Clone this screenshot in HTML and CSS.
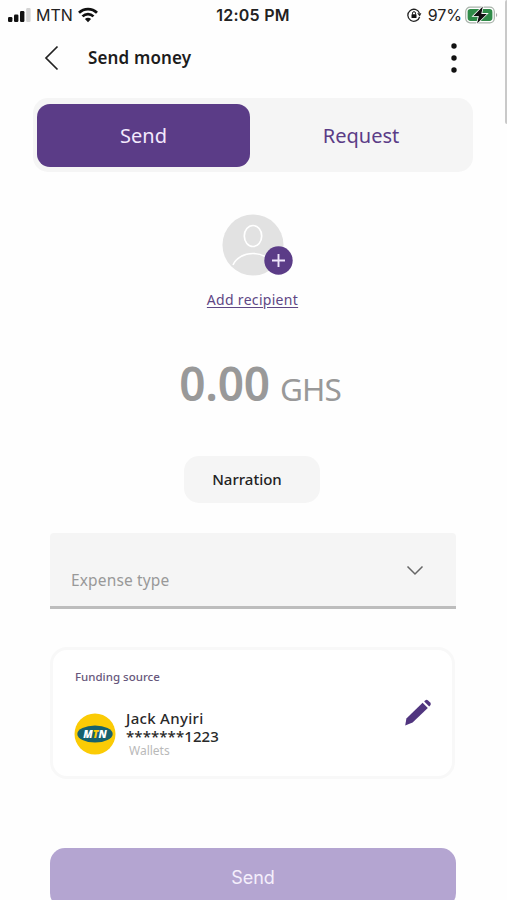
FILE: index.html
```
<!DOCTYPE html>
<html lang="en">
<head>
  <meta charset="UTF-8">
  <meta name="viewport" content="width=device-width, initial-scale=1.0">
  <title>Send money</title>
  <link rel="stylesheet" href="styles.css">
</head>
<body>
  <div class="screen">
    <div class="status-bar">
      <div class="status-left">
        <svg class="signal" width="23" height="16" viewBox="0 0 23 16">
          <rect x="0" y="10" width="4.4" height="5" rx="1.2" fill="#111"/>
          <rect x="6" y="7.5" width="4.4" height="7.5" rx="1.2" fill="#111"/>
          <rect x="12" y="4" width="4.4" height="11" rx="1.2" fill="#111"/>
          <rect x="18.2" y="1" width="4.4" height="14" rx="1.2" fill="#d4d4d4"/>
        </svg>
        <span class="carrier">MTN</span>
        <svg class="wifi" width="20" height="16" viewBox="0 0 20 16" fill="none" stroke="#111" stroke-width="2.7">
          <path d="M1 5.8C6 .8 14 .8 19 5.8"/>
          <path d="M4.5 9.4c3.2-3.1 7.8-3.1 11 0"/>
          <path d="M10 15.2l-3.1-3.1c1.8-1.7 4.4-1.7 6.2 0z" fill="#111" stroke="none"/>
        </svg>
      </div>
      <span class="clock">12:05 PM</span>
      <div class="status-right">
        <svg class="lock" width="15" height="14" viewBox="0 0 15 14">
          <path d="M12.4 5A6 6 0 1 0 12.6 9" fill="none" stroke="#222" stroke-width="1.3"/>
          <path d="M10.2 5.2h4.2l-1.7 3.2z" fill="#222"/>
          <rect x="4.5" y="6.2" width="5" height="3.9" rx=".6" fill="#111"/>
          <path d="M5.5 6.5V5.2a1.5 1.5 0 0 1 3 0v1.3" fill="none" stroke="#111"/>
        </svg>
        <span class="percent">97%</span>
        <svg class="battery" width="33" height="18" viewBox="0 0 33 18">
          <rect x=".7" y="1.2" width="28.6" height="15.6" rx="4.5" fill="#fff" stroke="#a9b3ab" stroke-width="1.2"/>
          <rect x="2.6" y="3.1" width="24.8" height="11.8" rx="2.8" fill="#2f8b48"/>
          <path d="M31 7v4c1.6-.6 1.6-3.4 0-4z" fill="#aaa"/>
          <path d="M17.8 0.6L8.4 10h5.4l-1.700 7.400L21.800 7.900h-5.500z" fill="#111" stroke="#fff" stroke-width="1.6" paint-order="stroke"/>
        </svg>
      </div>
    </div>

    <div class="header">
      <svg class="back" width="15" height="26" viewBox="0 0 15 26" fill="none" stroke="#222" stroke-width="1.7">
        <path d="M13.5 1.5L2 13l11.5 11.5"/>
      </svg>
      <h1>Send money</h1>
      <svg class="menu" width="8" height="32" viewBox="0 0 8 32" fill="#111">
        <circle cx="4" cy="4" r="2.7"/>
        <circle cx="4" cy="16" r="2.7"/>
        <circle cx="4" cy="28" r="2.7"/>
      </svg>
    </div>

    <div class="tabs">
      <div class="tab active">Send</div>
      <div class="tab">Request</div>
    </div>

    <div class="recipient">
      <div class="avatar">
        <svg width="62" height="62" viewBox="0 0 62 62">
          <circle cx="31" cy="31" r="30.5" fill="#e2e2e2"/>
          <g fill="none" stroke="#fff" stroke-width="1.7">
            <ellipse cx="31" cy="22" rx="8.7" ry="10.5"/>
            <path d="M11 51C14 44 22 39.500 31 39.500S48 44 51 51"/>
          </g>
        </svg>
        <svg class="badge" width="29" height="29" viewBox="0 0 29 29">
          <circle cx="14.5" cy="14.5" r="14.2" fill="#5b3c87"/>
          <path d="M14.5 8v13M8 14.500h13" stroke="#eee4fa" stroke-width="1.9"/>
        </svg>
      </div>
      <a class="add-link">Add recipient</a>
    </div>

    <div class="amount">
      <span class="value">0.00</span>
      <span class="currency">GHS</span>
    </div>

    <div class="narration">Narration</div>

    <div class="select">
      <span class="placeholder">Expense type</span>
      <svg class="chevron" width="18" height="11" viewBox="0 0 18 11" fill="none" stroke="#666" stroke-width="1.5">
        <path d="M1.5 1.5L9 9l7.5-7.5"/>
      </svg>
    </div>

    <div class="card">
      <div class="card-title">Funding source</div>
      <div class="source">
        <svg class="logo" width="42" height="42" viewBox="0 0 42 42">
          <circle cx="21" cy="21" r="20.5" fill="#fbcb05"/>
          <ellipse cx="21" cy="21" rx="17.7" ry="8.6" fill="#17616d"/>
          <text class="logo-text" x="21" y="24.8" text-anchor="middle">M<tspan fill="#fbcb05">T</tspan>N</text>
        </svg>
        <div class="account">
          <div class="name">Jack Anyiri</div>
          <div class="number">*******1223</div>
          <div class="type">Wallets</div>
        </div>
        <svg class="edit" width="28" height="28" viewBox="0 0 28 28" fill="#50357f">
          <path d="M18.600 3.800l5.200 5.200L8.600 23.600l-7.400 2.800 1.200-7z"/>
          <path d="M20.200 2.400l1-1a2 2 0 0 1 2.800 0l2.200 2.200a2 2 0 0 1 0 2.800l-1 1z"/>
        </svg>
      </div>
    </div>

    <div class="submit">Send</div>
    <div class="scrollbar"></div>
  </div>
</body>
</html>
```

FILE: styles.css
```
body {
  margin: 0;
  background: #fefefe;
  font-family: "Noto Sans", "Open Sans", sans-serif;
}

.screen {
  position: relative;
  box-sizing: border-box;
  width: 507px;
  height: 900px;
  overflow: hidden;
}

.status-bar {
  display: grid;
  grid-template-columns: 1fr auto 1fr;
  align-items: center;
  height: 30px;
  padding: 0 9px 0 8px;
  font-family: Inter, "Liberation Sans", sans-serif;
  font-size: 16px;
  line-height: 30px;
  color: #222;
}

.status-left, .status-right {
  display: flex;
  align-items: center;
}

.status-right {
  justify-content: flex-end;
}

.carrier {
  width: 36px;
  margin: 0 6px 0 5px;
}

.clock {
  font-weight: 600;
  letter-spacing: 0.25px;
}

.percent {
  margin: 0 3px 0 6px;
}

.header {
  display: flex;
  align-items: center;
  height: 56px;
  padding: 0 49px 0 44px;
}

.header h1 {
  flex: 1;
  margin: -2px 0 0 29px;
  font-size: 17px;
  font-weight: 600;
  letter-spacing: 0.15px;
  color: #1c1c1c;
}

.tabs {
  display: flex;
  box-sizing: border-box;
  height: 74px;
  margin: 12px 34px 0 33px;
  padding: 6px 4px 5px;
  background: #f5f5f5;
  border-radius: 15px;
}

.tab {
  flex: 1;
  padding-left: 3px;
  font-size: 20px;
  line-height: 63px;
  text-align: center;
  color: #5b3c87;
  border-radius: 13px;
}

.tab.active {
  flex: 0 0 213px;
  padding-left: 0;
  background: #5b3c87;
  color: #f3e9fd;
}

.recipient {
  display: flex;
  flex-direction: column;
  align-items: center;
  margin-top: 42px;
  padding-right: 2px;
}

.avatar {
  position: relative;
  width: 62px;
  height: 62px;
}

.badge {
  position: absolute;
  left: 42px;
  top: 32px;
}

.add-link {
  margin-top: 14px;
  font-size: 14px;
  line-height: 20px;
  letter-spacing: 0.3px;
  color: #5f4785;
  text-decoration: underline;
  text-underline-offset: 2px;
}

.amount {
  display: flex;
  align-items: baseline;
  justify-content: center;
  gap: 10px;
  height: 64px;
  margin-top: 41px;
  padding-left: 13px;
  line-height: 64px;
  color: #999;
}

.value {
  font-size: 46px;
  font-weight: 600;
  letter-spacing: -0.2px;
}

.currency {
  font-size: 31.5px;
  letter-spacing: -0.9px;
}

.narration {
  width: 126px;
  height: 47px;
  margin: 41px 0 0 184px;
  padding-right: 10px;
  background: #f5f5f5;
  border-radius: 15px;
  font-size: 15px;
  font-weight: 500;
  line-height: 47px;
  text-align: center;
  color: #222;
}

.select {
  display: flex;
  justify-content: space-between;
  box-sizing: border-box;
  height: 76px;
  margin: 30px 51px 0 50px;
  padding: 32px 32px 0 21px;
  background: #f5f5f5;
  border-bottom: 3px solid #bdbdbd;
  border-radius: 4px 4px 0 0;
}

.placeholder {
  font-size: 15.5px;
  line-height: 30px;
  letter-spacing: 0.15px;
  color: #999;
}

.card {
  box-sizing: border-box;
  height: 132px;
  margin: 38px 52px 0 50px;
  padding: 17px 20px 0 22px;
  background: #fff;
  border: 3px solid #f8f8f8;
  border-radius: 17px;
}

.card-title {
  font-size: 11.5px;
  font-weight: 500;
  line-height: 20px;
  color: #67577c;
}

.source {
  display: flex;
  margin-top: 13px;
}

.logo {
  margin: 13px 0 0 -1px;
}

.logo-text {
  font-family: "Open Sans", sans-serif;
  font-size: 10.5px;
  font-style: italic;
  font-weight: 800;
  fill: #fff;
}

.account {
  flex: 1;
  margin: 9px 0 0 10px;
  color: #292929;
}

.name, .number {
  font-size: 15px;
  font-weight: 500;
  line-height: 18px;
}

.name {
  letter-spacing: 0.3px;
}

.number {
  letter-spacing: 0.1px;
}

.type {
  margin: -1px 0 0 3px;
  font-size: 12px;
  line-height: 14px;
  color: #b9b9b9;
}

.edit {
  margin-top: -1px;
}

.submit {
  height: 60px;
  margin: 69px 51px 0 50px;
  background: #b4a5d1;
  border-radius: 15px;
  font-family: Inter, sans-serif;
  font-size: 18px;
  line-height: 60px;
  text-align: center;
  color: #f5effc;
}

.scrollbar {
  position: absolute;
  top: 0;
  right: 0;
  width: 2px;
  height: 124px;
  background: #c9c9c9;
  border-radius: 2px 0 0 2px;
}
```
